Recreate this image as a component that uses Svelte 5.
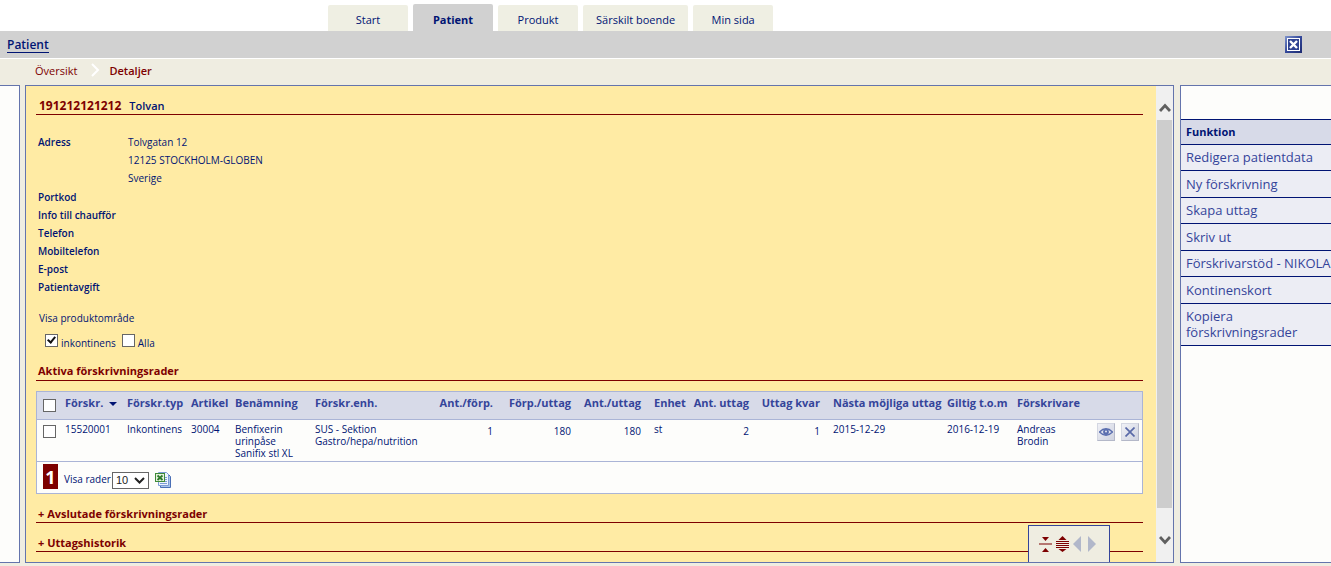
<script>
  let tabs = ["Start", "Patient", "Produkt", "Särskilt boende", "Min sida"];
  let activeTab = "Patient";

  let details = [
    { label: "Adress", lines: ["Tolvgatan 12", "12125 STOCKHOLM-GLOBEN", "Sverige"] },
    { label: "Portkod", lines: [] },
    { label: "Info till chaufför", lines: [] },
    { label: "Telefon", lines: [] },
    { label: "Mobiltelefon", lines: [] },
    { label: "E-post", lines: [] },
    { label: "Patientavgift", lines: [] },
  ];

  let columns = [
    { key: "id", title: "Förskr.", width: 62, sorted: true },
    { key: "type", title: "Förskr.typ", width: 64 },
    { key: "article", title: "Artikel", width: 44 },
    { key: "name", title: "Benämning", width: 80 },
    { key: "unitName", title: "Förskr.enh.", width: 114 },
    { key: "perPack", title: "Ant./förp.", width: 72, num: true },
    { key: "packs", title: "Förp./uttag", width: 78, num: true },
    { key: "perPickup", title: "Ant./uttag", width: 70, num: true },
    { key: "unit", title: "Enhet", width: 43, wide: true },
    { key: "pickups", title: "Ant. uttag", width: 65, num: true },
    { key: "left", title: "Uttag kvar", width: 71, num: true },
    { key: "next", title: "Nästa möjliga uttag", width: 119, wide: true },
    { key: "valid", title: "Giltig t.o.m", width: 70 },
    { key: "prescriber", title: "Förskrivare", width: 72 },
  ];

  let rows = [
    {
      id: "15520001",
      type: "Inkontinens",
      article: "30004",
      name: "Benfixerin urinpåse Sanifix stl XL",
      unitName: "SUS - Sektion Gastro/hepa/nutrition",
      perPack: 1,
      packs: 180,
      perPickup: 180,
      unit: "st",
      pickups: 2,
      left: 1,
      next: "2015-12-29",
      valid: "2016-12-19",
      prescriber: "Andreas Brodin",
      checked: false,
    },
  ];

  let functions = [
    "Redigera patientdata",
    "Ny förskrivning",
    "Skapa uttag",
    "Skriv ut",
    "Förskrivarstöd - NIKOLA",
    "Kontinenskort",
    "Kopiera förskrivningsrader",
  ];

  let showIncontinence = true;
  let showAll = false;
  let pageSize = "10";

  function toggleRows(event) {
    rows = rows.map((row) => ({ ...row, checked: event.target.checked }));
  }
</script>

<div class="page">
  <nav class="tabs">
    {#each tabs as tab}
      <button class="tab" class:active={tab === activeTab} on:click={() => (activeTab = tab)}>{tab}</button>
    {/each}
  </nav>

  <header class="title-bar">
    <a href="#patient">Patient</a>
    <button class="close" aria-label="Stäng">
      <svg width="17" height="17" viewBox="0 0 17 17">
        <defs>
          <linearGradient id="close-bg" x1="0" y1="0" x2="1" y2="1">
            <stop offset="0" stop-color="#7f94cc" />
            <stop offset="0.5" stop-color="#34489a" />
            <stop offset="1" stop-color="#1c2a70" />
          </linearGradient>
        </defs>
        <rect width="17" height="17" fill="url(#close-bg)" />
        <rect x="2.5" y="2.5" width="12" height="12" fill="#2f4291" stroke="#fff" />
        <path d="M5 5l7 7M12 5l-7 7" stroke="#fff" stroke-width="2.4" />
      </svg>
    </button>
  </header>

  <nav class="crumbs">
    <a href="#oversikt">Översikt</a>
    <svg width="9" height="14" viewBox="0 0 9 14"><path d="M1 1l6 6-6 6" fill="none" stroke="#fff" stroke-width="2" /></svg>
    <a href="#detaljer" class="current">Detaljer</a>
  </nav>

  <div class="panels">
    <div class="side-left"></div>

    <main class="main">
      <div class="content">
        <h1><span class="pid">191212121212</span> <span>Tolvan</span></h1>

        <dl>
          {#each details as item}
            <div class="detail" class:multi={item.lines.length > 1}>
              <dt>{item.label}</dt>
              <dd>
                {#each item.lines as line}<div>{line}</div>{/each}
              </dd>
            </div>
          {/each}
        </dl>

        <p class="filter-title">Visa produktområde</p>
        <div class="filters">
          <label><input type="checkbox" bind:checked={showIncontinence} /><span>inkontinens</span></label>
          <label><input type="checkbox" bind:checked={showAll} /><span>Alla</span></label>
        </div>

        <h2>Aktiva förskrivningsrader</h2>

        <div class="grid">
          <table>
            <colgroup>
              <col style="width: 24px" />
              {#each columns as column}<col style="width: {column.width}px" />{/each}
              <col />
            </colgroup>
            <thead>
              <tr>
                <th class="check"><input type="checkbox" aria-label="Markera alla" on:change={toggleRows} /></th>
                {#each columns as column}
                  <th class:num={column.num} class:wide={column.wide}>
                    {column.title}
                    {#if column.sorted}
                      <svg class="sort" width="8" height="4" viewBox="0 0 8 4"><path d="M0 0h8L4 4z" fill="#001473" /></svg>
                    {/if}
                  </th>
                {/each}
                <th></th>
              </tr>
            </thead>
            <tbody>
              {#each rows as row}
                <tr>
                  <td class="check"><input type="checkbox" aria-label="Markera {row.id}" bind:checked={row.checked} /></td>
                  {#each columns as column}
                    <td class:num={column.num} class:wide={column.wide}>{row[column.key]}</td>
                  {/each}
                  <td class="actions">
                    <div>
                      <button aria-label="Visa">
                        <svg width="14" height="10" viewBox="0 0 14 10">
                          <path d="M.5 5Q7-1.500 13.500 5Q7 11.500.5 5z" fill="#e3e5ee" stroke="#5a6eaf" stroke-width="1.400" />
                          <circle cx="7" cy="5" r="2.900" fill="#5a6eaf" />
                          <circle cx="7" cy="4.500" r="1" fill="#e3e5ee" />
                        </svg>
                      </button>
                      <button aria-label="Ta bort">
                        <svg width="10" height="10" viewBox="0 0 10 10"><path d="M.5.5l9 9M9.500.5l-9 9" stroke="#5a6aa8" stroke-width="1.700" /></svg>
                      </button>
                    </div>
                  </td>
                </tr>
              {/each}
            </tbody>
          </table>

          <div class="pager">
            <button class="page-no">1</button>
            <label for="page-size">Visa rader</label>
            <span class="select">
              <select id="page-size" bind:value={pageSize}>
                <option>10</option>
                <option>25</option>
                <option>50</option>
              </select>
              <svg width="11" height="7" viewBox="0 0 11 7"><path d="M1 1l4.500 4.500L10 1" fill="none" stroke="#222" stroke-width="2" /></svg>
            </span>
            <button class="excel" aria-label="Exportera till Excel">
              <svg width="16" height="16" viewBox="0 0 16 16">
                <path d="M6.500 2.500h7l2 2v11h-10v-2z" fill="#a9c4ea" stroke="#4a6fb5" />
                <path d="M3.500.5h8l2 2v11h-10z" fill="#eef4fc" stroke="#7c9cd6" />
                <path d="M5 11.500h7M10 9.500h2M10 7.500h2M10 5.500h2" stroke="#7c9cd6" />
                <rect x=".5" y="1.500" width="9" height="8" fill="#e6f1de" stroke="#3e8b37" />
                <path d="M2.500 3.500l5 4.500M7.500 3.500l-5 4.500" stroke="#2c7a29" stroke-width="1.800" />
              </svg>
            </button>
          </div>
        </div>

        <h2 class="closed"><button>+ Avslutade förskrivningsrader</button></h2>
        <h2 class="closed"><button>+ Uttagshistorik</button></h2>
      </div>

      <div class="scrollbar">
        <svg width="12" height="9" viewBox="0 0 12 9"><path d="M1 8l5-5.500L11 8" fill="none" stroke="#606060" stroke-width="2.800" /></svg>
        <div class="thumb"></div>
        <svg width="12" height="9" viewBox="0 0 12 9"><path d="M1 1l5 5.500L11 1" fill="none" stroke="#606060" stroke-width="2.800" /></svg>
      </div>

      <div class="tools">
        <button aria-label="Minimera alla">
          <svg width="13" height="16" viewBox="0 0 13 16" fill="#7d0000">
            <path d="M3 1h7L6.500 5zM0 7.500h13v1H0zM3 16h7L6.500 12z" />
          </svg>
        </button>
        <button aria-label="Expandera alla">
          <svg width="13" height="16" viewBox="0 0 13 16" fill="#7d0000">
            <path d="M2.500 4h8L6.500 0zM0 5h13v1H0zM0 7h13v1H0zM0 9h13v1H0zM0 11h13v1H0zM2.500 13h8L6.500 16z" />
          </svg>
        </button>
        <button aria-label="Föregående">
          <svg width="8" height="16" viewBox="0 0 8 16"><path d="M8 0v16L0 8z" fill="#b1b7ca" /></svg>
        </button>
        <button aria-label="Nästa">
          <svg width="8" height="16" viewBox="0 0 8 16"><path d="M0 0v16l8-8z" fill="#b1b7ca" /></svg>
        </button>
      </div>
    </main>

    <aside class="side-right">
      <h3>Funktion</h3>
      <ul>
        {#each functions as name}
          <li><a href="#funktion">{name}</a></li>
        {/each}
      </ul>
    </aside>
  </div>
</div>

<style>
  :global(body) {
    margin: 0;
    background: #efede1;
  }

  .page {
    display: flex;
    flex-direction: column;
    min-height: 100vh;
    box-sizing: border-box;
    padding-bottom: 3px;
    font-family: "Trebuchet MS", "Open Sans", sans-serif;
    font-size: 10px;
    color: #001473;
  }

  a {
    color: inherit;
    text-decoration: none;
  }

  button {
    padding: 0;
    border: none;
    background: none;
    font: inherit;
    color: inherit;
    cursor: pointer;
  }

  svg {
    display: block;
  }

  h1,
  h2,
  h3,
  p,
  dl,
  dd,
  ul {
    margin: 0;
    padding: 0;
  }

  .tabs {
    display: flex;
    align-items: flex-end;
    gap: 5px;
    height: 31px;
    padding-left: 328px;
    background: #fff;
  }

  .tab {
    min-width: 80px;
    height: 26px;
    padding: 3px 13px 0;
    border-radius: 2px 2px 0 0;
    background: #efefe3;
    font-size: 11px;
    white-space: nowrap;
  }

  .tab.active {
    height: 27px;
    background: #d1d1d1;
    font-weight: bold;
  }

  .title-bar {
    display: flex;
    align-items: center;
    justify-content: space-between;
    height: 27px;
    padding: 0 29px 0 7px;
    border-bottom: 1px solid #fff;
    background: #d1d1d1;
    font-size: 12px;
  }

  .title-bar a {
    padding-top: 2px;
    border-bottom: 1px solid #001473;
    font-weight: 600;
    line-height: 14px;
  }

  .crumbs {
    display: flex;
    align-items: center;
    height: 22px;
    padding: 0 35px 4px;
    color: #7d0000;
    font-size: 11px;
  }

  .crumbs svg {
    margin: 0 9px 0 14px;
  }

  .crumbs .current {
    font-weight: 600;
  }

  .panels {
    display: flex;
    flex: 1;
  }

  .side-left {
    flex: none;
    width: 19px;
    margin-right: 5px;
    border: 1px solid #6474ac;
    border-left: none;
    background: #fdfdfb;
  }

  .main {
    position: relative;
    display: flex;
    flex: 1;
    min-width: 0;
    border: 1px solid #6474ac;
    background: #ffeba4;
  }

  .content {
    flex: 1;
    min-width: 0;
    padding: 10px 13px 9px 10px;
  }

  h1 {
    display: flex;
    align-items: center;
    gap: 8px;
    height: 18px;
    padding-left: 3px;
    border-bottom: 1px solid #7d0000;
    font-size: 11px;
    font-weight: 600;
  }

  .pid {
    color: #7d0000;
    font-size: 12px;
    font-weight: bold;
  }

  dl {
    margin-top: 18px;
    padding-left: 2px;
    line-height: 18px;
  }

  .detail {
    display: flex;
  }

  .detail.multi {
    padding-bottom: 1px;
  }

  dt {
    width: 90px;
    white-space: nowrap;
    font-weight: 600;
  }

  .filter-title {
    margin-top: 13px;
    padding-left: 3px;
    line-height: 18px;
  }

  .filters {
    display: flex;
    gap: 6px;
    margin-top: 7px;
    padding-left: 9px;
  }

  .filters label {
    display: flex;
    gap: 3px;
    line-height: 18px;
  }

  input[type="checkbox"] {
    appearance: none;
    position: relative;
    box-sizing: border-box;
    width: 13px;
    height: 13px;
    margin: 0;
    border: 1px solid #666;
    background: #fff;
  }

  input[type="checkbox"]:checked::after {
    content: "";
    position: absolute;
    left: 3px;
    top: 0;
    width: 3px;
    height: 6px;
    border: solid #111;
    border-width: 0 2px 2px 0;
    transform: rotate(40deg);
  }

  h2 {
    height: 18px;
    margin-top: 10px;
    padding-left: 2px;
    border-bottom: 1px solid #7d0000;
    color: #7d0000;
    font-size: 11px;
    font-weight: bold;
    line-height: 17px;
  }

  h2.closed {
    display: flex;
  }

  .grid {
    margin: 10px 0;
    border: 1px solid #aab4d6;
    background: #fdfdfb;
  }

  table {
    width: 100%;
    table-layout: fixed;
    border-collapse: collapse;
  }

  th,
  td {
    padding: 3px 4px 2px;
    border-bottom: 1px solid #aab4d6;
    text-align: left;
    vertical-align: top;
    line-height: 12px;
  }

  th {
    height: 22px;
    padding-top: 5px;
    padding-bottom: 0;
    background: #d7dae8;
    color: #34449a;
    font-size: 11px;
    font-weight: bold;
    white-space: nowrap;
  }

  .check {
    padding: 5px 0 0 6px;
  }

  th.check {
    padding-top: 7px;
    height: 20px;
  }

  .wide {
    padding-left: 9px;
  }

  .num {
    text-align: right;
  }

  td.num {
    padding-top: 5px;
  }

  .check input {
    display: block;
  }

  .sort {
    display: inline-block;
    margin-left: 3px;
    vertical-align: 1px;
  }

  td.actions {
    padding-right: 3px;
  }

  .actions div {
    display: flex;
    justify-content: flex-end;
    gap: 6px;
  }

  .actions button {
    display: flex;
    align-items: center;
    justify-content: center;
    width: 18px;
    height: 18px;
    border: 1px solid #d4d7e2;
    border-right-color: #b4b8c8;
    border-bottom-color: #b4b8c8;
    background: linear-gradient(135deg, #f0f1f6, #cfd3e0);
  }

  .pager {
    display: flex;
    align-items: center;
    height: 31px;
    padding-left: 6px;
  }

  .page-no {
    align-self: flex-start;
    width: 15px;
    height: 25px;
    margin: 2px 6px 0 0;
    background: #7d0000;
    color: #fff;
    font-size: 18px;
    font-weight: bold;
    line-height: 24px;
  }

  .pager label {
    padding-top: 3px;
  }

  .select {
    position: relative;
    margin: 5px 6px 0 1px;
  }

  select {
    appearance: none;
    display: block;
    width: 37px;
    height: 17px;
    padding: 0 0 0 3px;
    border: 1px solid #666;
    border-radius: 0;
    background: #fff;
    color: #222;
    font: 11px "Liberation Sans", Arial, sans-serif;
  }

  .select svg {
    position: absolute;
    right: 4px;
    top: 5px;
    pointer-events: none;
  }

  .excel {
    padding-top: 5px;
  }

  .scrollbar {
    display: flex;
    flex-direction: column;
    align-items: center;
    gap: 8px;
    width: 17px;
    padding: 17px 0;
    box-sizing: border-box;
    background: #f0f0f0;
  }

  .thumb {
    flex: 1;
    width: 15px;
    margin-bottom: 20px;
    background: #cdcdcd;
  }

  .tools {
    position: absolute;
    right: 63px;
    bottom: 0;
    display: flex;
    align-items: center;
    gap: 4px;
    padding: 10px;
    border: 1px solid #34449a;
    border-bottom: none;
    background: #efede1;
  }

  .tools button + button {
    min-width: 11px;
  }

  .side-right {
    flex: none;
    box-sizing: border-box;
    width: 151px;
    margin-left: 6px;
    padding-top: 33px;
    border: 1px solid #6474ac;
    border-right: none;
    background: #fdfdfb;
  }

  h3 {
    padding: 4px 5px;
    border: solid #001473;
    border-width: 1px 0;
    background: #d7dae8;
    font-size: 11px;
    line-height: 16px;
  }

  ul {
    list-style: none;
    color: #34449a;
    font-size: 13px;
    line-height: 16px;
  }

  li {
    padding: 4px 0 5px 5px;
    border-bottom: 1px solid #001473;
    background: #ecedf4;
  }

  li:nth-child(even) {
    padding-top: 5px;
  }
</style>
